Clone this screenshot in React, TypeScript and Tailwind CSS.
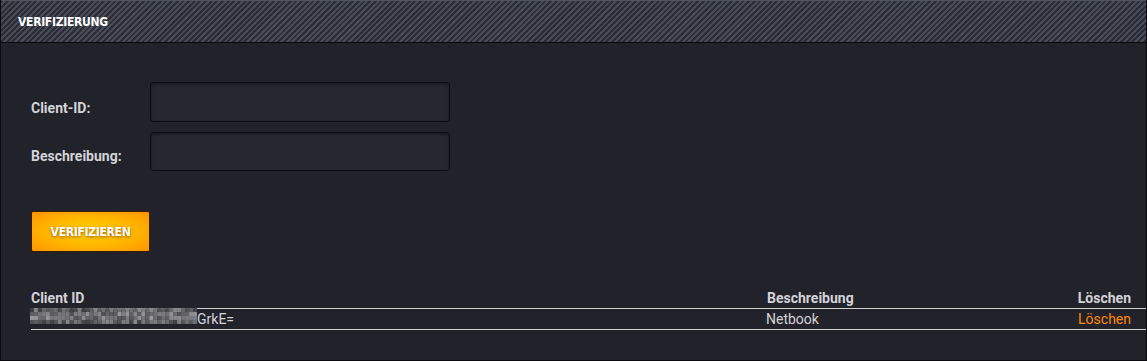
import React from 'react'

const font = { fontFamily: 'Roboto, "Liberation Sans", sans-serif' }

// pseudo pixelated blur for the hidden client id
function Pixelated() {
  const cols = 42
  const rows = 4
  const cells = []
  for (let r = 0; r < rows; r++) {
    for (let c = 0; c < cols; c++) {
      const v = (Math.sin(c * 12.9898 + r * 78.233) * 43758.5453) % 1
      const t = Math.abs(v)
      const g = Math.round(80 + t * 75 + (r === 0 || r === 3 ? -18 : 0))
      cells.push(<rect key={r + '-' + c} x={c * 4} y={r * 4} width={4} height={4} fill={`rgb(${g},${g},${g + 4})`} />)
    }
  }
  return (
    <svg width={167} height={16} viewBox="0 0 168 16" className="block shrink-0 -mt-[3px]">
      {cells}
    </svg>
  )
}

export default function App() {
  return (
    <div className="w-[1147px] h-[361px] bg-[#22222b] border-l border-r border-b border-[#0b0b0e] flex flex-col" style={font}>
      {/* Header */}
      <div className="h-[43px] border-t border-t-[#50545f] border-b border-b-[#08080a] bg-[repeating-linear-gradient(135deg,#2b2c35_0px,#2b2c35_2px,#474a57_2px,#474a57_4px)] flex items-center px-[17px]">
        <span className="text-white text-[12px] font-bold tracking-[-0.3px] [font-family:'DejaVu_Sans_Condensed','Roboto',sans-serif]">VERIFIZIERUNG</span>
      </div>

      {/* Form */}
      <div className="pl-[30px] pt-[39px] flex flex-col gap-[10px]">
        <div className="flex items-center">
          <label className="w-[119px] text-[14px] font-bold text-[#d4d4d8] pt-[12px]">Client-ID:</label>
          <input className="w-[300px] h-[40px] rounded-[3px] bg-[#272730] border border-[#0e0e12] shadow-[inset_0_1px_3px_rgba(0,0,0,0.5)] outline-none" />
        </div>
        <div className="flex items-center">
          <label className="w-[119px] text-[14px] font-bold text-[#d4d4d8] pt-[10px]">Beschreibung:</label>
          <input className="w-[300px] h-[39px] rounded-[3px] bg-[#272730] border border-[#0e0e12] shadow-[inset_0_1px_3px_rgba(0,0,0,0.5)] outline-none" />
        </div>
        <div className="pt-[30px]">
          <button className="w-[119px] h-[41px] rounded-[2px] border border-[#3a1c00] bg-[radial-gradient(ellipse_at_center,#ffd000_0%,#ffb800_50%,#ff9400_100%)] text-white text-[12px] font-bold tracking-[-0.3px] [text-shadow:0_1px_3px_rgba(120,60,0,0.8)] [font-family:'DejaVu_Sans_Condensed','Roboto',sans-serif]">
            VERIFIZIEREN
          </button>
        </div>
      </div>

      {/* Table */}
      <div className="pl-[30px] pt-[36px] text-[14px]">
        <div className="flex h-[21px] items-center pr-[15px] border-b border-[#d0d0d0]">
          <div className="w-[736px] font-bold text-[#d4d4d8]">Client ID</div>
          <div className="flex-1 font-bold text-[#d4d4d8]">Beschreibung</div>
          <div className="font-bold text-[#d4d4d8]">Löschen</div>
        </div>
        <div className="flex h-[21px] items-center pr-[15px] border-b border-[#d0d0d0]">
          <div className="w-[736px] flex items-start text-[#d4d4d8] -ml-[1px]">
            <Pixelated />
            <span className="leading-[16px]">GrkE=</span>
          </div>
          <div className="flex-1 text-[#d4d4d8]">Netbook</div>
          <div className="text-[#ff8a00]">Löschen</div>
        </div>
      </div>
    </div>
  )
}
